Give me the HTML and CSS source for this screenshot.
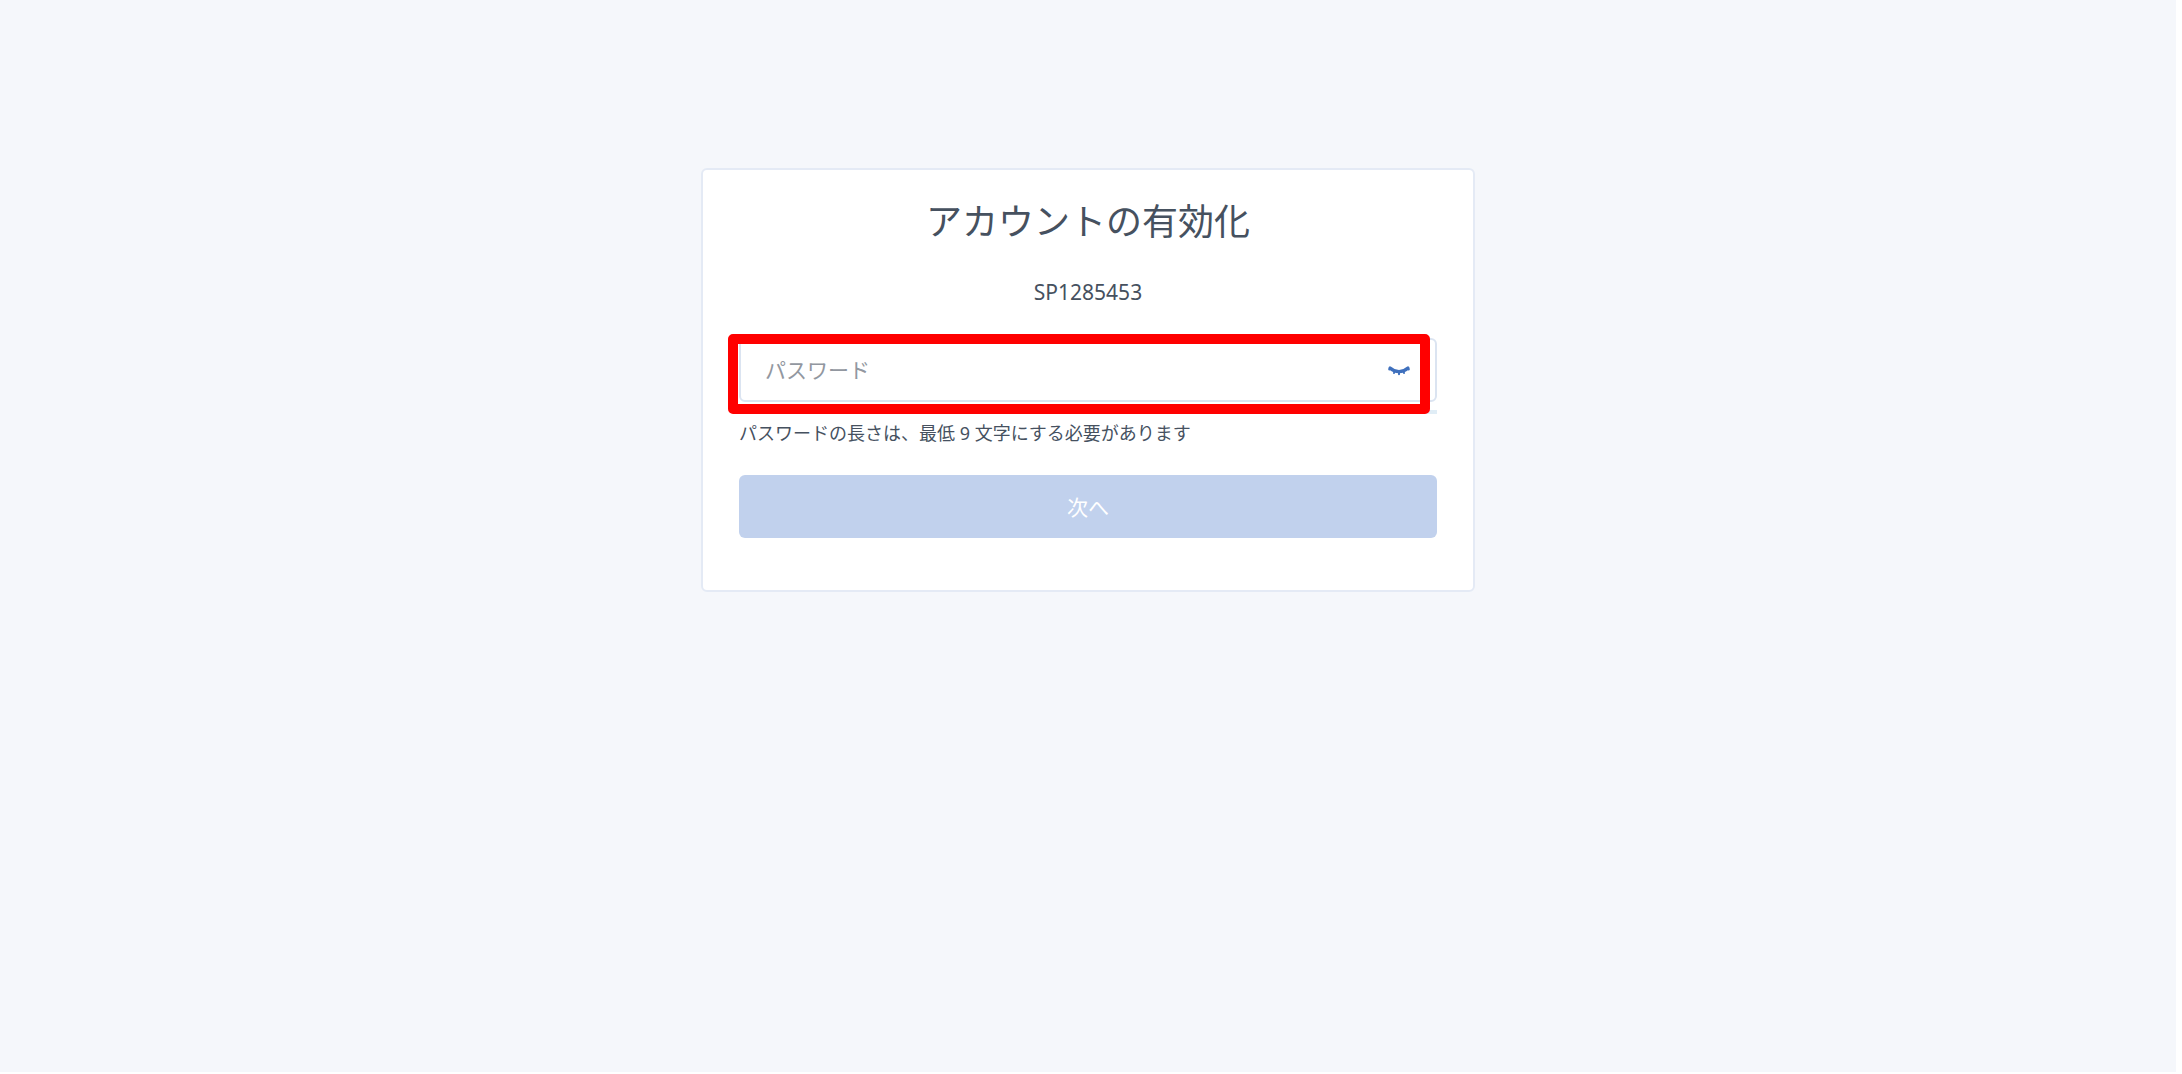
FILE: index.html
```html
<!DOCTYPE html>
<html lang="ja">
<head>
    <meta charset="utf-8">
    <meta name="viewport" content="width=device-width, initial-scale=1">
    <title>アカウントの有効化</title>
    <link rel="stylesheet" href="styles.css">
</head>
<body>
    <main class="page">
        <form class="card">
            <h1>アカウントの有効化</h1>
            <p class="account">SP1285453</p>

            <div class="password">
                <div class="field">
                    <input type="password" id="password" placeholder="パスワード" aria-label="パスワード" aria-describedby="passwordHint" minlength="9">
                    <button type="button" class="toggle" aria-label="パスワードを表示">
                        <svg width="24" height="14" viewBox="0 0 24 14" fill="none" stroke="#3f70bd" stroke-linecap="round">
                            <path d="M3 5C8 9.700 16 9.700 21 5" stroke-width="3.200"/>
                            <path d="M2.500 6L2.200 6.500M7.500 8.500L7 10M12 9V11.200M16.500 8.500L17 10M21.500 6L21.800 6.500" stroke-width="2"/>
                        </svg>
                    </button>
                </div>
                <div class="strength"></div>
                <div class="highlight"></div>
            </div>
            <p class="hint" id="passwordHint">パスワードの長さは、最低 9 文字にする必要があります</p>

            <button type="submit" class="btn" disabled>次へ</button>
        </form>
    </main>
</body>
</html>
```

FILE: styles.css
```css
* {
    box-sizing: border-box;
}

body {
    margin: 0;
    padding: 0 6px 2px 0;
    background-color: white;
    font-family: "Noto Sans", "Noto Sans CJK JP", sans-serif;
    color: #46515f;
}

.page {
    display: flex;
    justify-content: center;
    align-items: flex-start;
    min-height: calc(100vh - 2px);
    padding: 168px 16px 40px;
    background-color: #f5f7fb;
}

.card {
    width: 100%;
    max-width: 774px;
    padding: 30px 36px 52px;
    background-color: white;
    border: 2px solid #e4eaf5;
    border-radius: 6px;
}

h1 {
    margin: 0 0 34px;
    font-size: 36px;
    font-weight: 400;
    line-height: 44px;
    text-align: center;
}

.account {
    margin: 0 0 32px;
    font-size: 21px;
    line-height: 28px;
    text-align: center;
}

.password {
    position: relative;
}

.field {
    display: flex;
    align-items: center;
    height: 64px;
    padding: 0 24px;
    border: 2px solid #dbe4f1;
    border-radius: 6px;
}

.field input {
    flex: 1;
    min-width: 0;
    padding: 0;
    border: none;
    outline: none;
    background: none;
    font-family: inherit;
    font-size: 21px;
    line-height: 28px;
    color: #46515f;
}

.field input::placeholder {
    color: #9297a0;
    opacity: 1;
}

.toggle {
    display: flex;
    padding: 0;
    border: none;
    background: none;
    cursor: pointer;
}

.strength {
    height: 4px;
    margin-top: 8px;
    background-color: #e0edf6;
}

/* red frame around the password box */
.highlight {
    position: absolute;
    top: -4px;
    right: 7px;
    bottom: 0;
    left: -11px;
    border: 10px solid #ff0000;
    border-radius: 5px;
    pointer-events: none;
}

.hint {
    margin: 7px 0 30px;
    font-size: 18px;
    line-height: 24px;
}

.btn {
    display: block;
    width: 100%;
    height: 63px;
    padding: 0;
    border: none;
    border-radius: 6px;
    background-color: #c1d1ed;
    color: white;
    font-family: inherit;
    font-size: 21px;
    line-height: 28px;
}
```
